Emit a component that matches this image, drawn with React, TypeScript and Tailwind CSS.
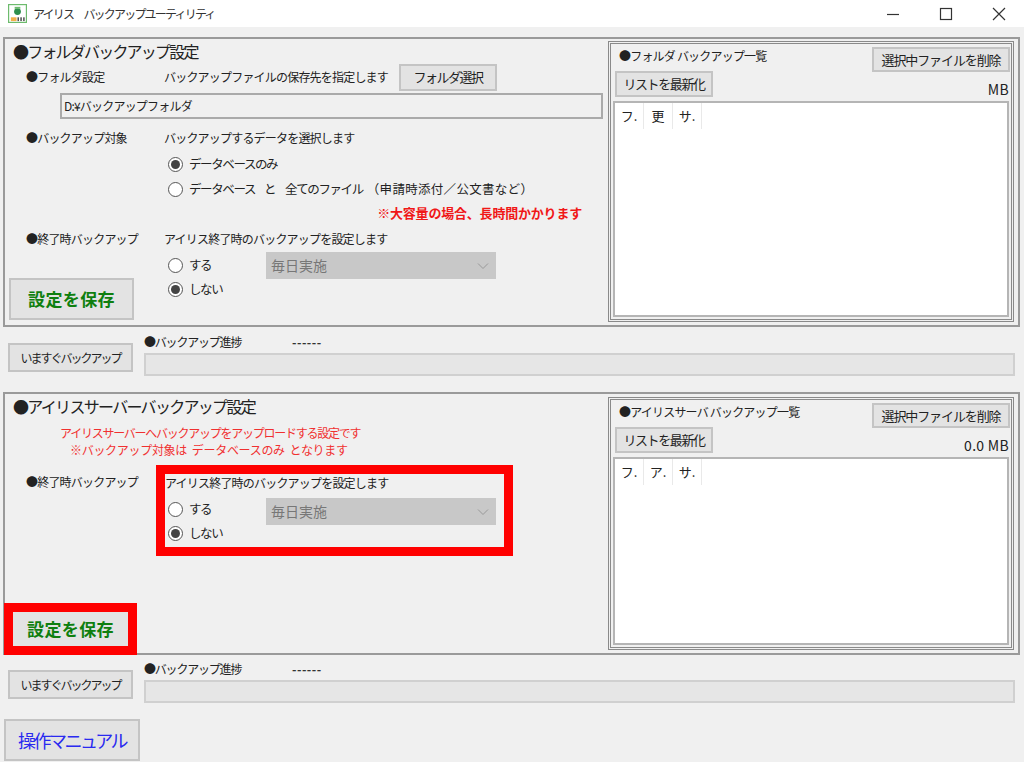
import type { ReactNode } from "react";

const font = "font-['Noto_Sans_CJK_JP','Noto_Sans',sans-serif]";

function Radio({ checked, label, className = "" }: { checked?: boolean; label: ReactNode; className?: string }) {
  return (
    <div className={`flex items-center gap-[6px] whitespace-nowrap text-[12.5px] tracking-[-1.4px] text-[#222] ${className}`}>
      <span className="flex h-[15px] w-[15px] items-center justify-center rounded-full border border-[#555] bg-white">
        {checked ? <span className="h-[9px] w-[9px] rounded-full bg-[#444]" /> : null}
      </span>
      <span>{label}</span>
    </div>
  );
}

function Btn({ children, className = "" }: { children: ReactNode; className?: string }) {
  return (
    <div className={`flex items-center justify-center border-2 border-[#c4c4c4] bg-[#e3e3e3] whitespace-nowrap ${className}`}>
      {children}
    </div>
  );
}

function Label({ children, className = "" }: { children: ReactNode; className?: string }) {
  return <div className={`whitespace-nowrap text-[12px] leading-[18px] tracking-[-0.8px] text-[#222] ${className}`}>{children}</div>;
}

function Select() {
  return (
    <div className="flex h-[27px] w-[230px] items-center justify-between bg-[#c8c8c8] pl-[5px] pr-[7px] text-[14px] text-[#777]">
      <span>毎日実施</span>
      <svg width="12" height="8" viewBox="0 0 12 8" fill="none" stroke="#999" strokeWidth="1">
        <path d="M1 1.5 6 6.5 11 1.5" />
      </svg>
    </div>
  );
}

function ListPanel({ title, size, cols, h }: { title: string; size: string; cols: string[]; h: string }) {
  return (
    <div className={`relative mr-[3px] w-[406px] border-[3px] border-double border-[#8a8a8a] bg-[#f0f0f0] ${h}`}>
      <div className="flex items-start justify-between pl-[6px] pr-[1px] pt-[3px]">
        <Label className="pl-[2px]">{title}</Label>
        <Btn className="h-[25px] w-[138px] text-[13px] tracking-[-1.1px] text-[#222]">選択中ファイルを削除</Btn>
      </div>
      <div className="-mt-[1px] flex items-end justify-between pl-[4px] pr-[2px]">
        <Btn className="h-[26px] w-[98px] text-[13px] tracking-[-1.4px] text-[#222]">リストを最新化</Btn>
        <span className="text-[14px] leading-[16px] tracking-[0.3px] text-[#222]">{size}</span>
      </div>
      <div className="mx-[2px] mt-[4px] flex h-[calc(100%-59px)] items-start border-2 border-[#b5b5b5] bg-white">
        {cols.map((c) => (
          <div key={c} className="flex h-[26px] w-[29px] items-center justify-center border-r border-[#e9e9e9] text-[13px] text-[#222]">
            {c}
          </div>
        ))}
      </div>
    </div>
  );
}

function Progress() {
  return (
    <div className="flex px-[8px]">
      <Btn className="mt-[10px] h-[29px] w-[125px] text-[12px] tracking-[-2px] text-[#222]">いますぐバックアップ</Btn>
      <div className="ml-[11px] flex-1">
        <div className="flex h-[18px] items-center text-[12px] text-[#222]">
          <span className="w-[148px] tracking-[-1.2px]">●バックアップ進捗</span>
          <span className="font-bold tracking-[0.5px] text-[#333]">------</span>
        </div>
        <div className="mr-[1px] mt-[2px] h-[23px] border-2 border-[#d0d0d0] bg-[#e6e6e6]" />
      </div>
    </div>
  );
}

export default function App() {
  return (
    <div className={`flex h-[762px] w-[1024px] flex-col overflow-hidden bg-[#f0f0f0] ${font}`}>
      {/* title bar */}
      <div className="flex h-[27px] shrink-0 items-center bg-white pl-[8px]">
        <svg width="19" height="19" viewBox="0 0 20 20">
          <rect x="0.5" y="0.5" width="19" height="19" fill="#fff" stroke="#6dbb6d" strokeWidth="1.5" />
          <circle cx="10" cy="8" r="3.6" fill="#2f8f4e" />
          <rect x="7" y="3" width="6" height="2" fill="#6dbb6d" />
          <rect x="3" y="14" width="6" height="4" fill="#f2b04a" />
          <rect x="10" y="14" width="1.5" height="4" fill="#444" />
          <rect x="13" y="14" width="1.5" height="4" fill="#444" />
          <rect x="16" y="14" width="1.5" height="4" fill="#444" />
        </svg>
        <span className="ml-[6px] whitespace-nowrap text-[12px] tracking-[-1.8px] text-[#333]">アイリス　バックアップユーティリティ</span>
        <div className="ml-auto flex items-center">
          <svg width="14" height="14" viewBox="0 0 14 14" stroke="#333" strokeWidth="1.2" fill="none" className="mr-[39px]">
            <path d="M1 7.5H13" />
          </svg>
          <svg width="14" height="14" viewBox="0 0 14 14" stroke="#333" strokeWidth="1.2" fill="none" className="mr-[39px]">
            <rect x="1.5" y="1.5" width="11" height="11" />
          </svg>
          <svg width="14" height="14" viewBox="0 0 14 14" stroke="#333" strokeWidth="1.2" fill="none" className="mr-[18px]">
            <path d="M1 1 13 13M13 1 1 13" />
          </svg>
        </div>
      </div>

      {/* folder backup */}
      <div className="mx-[3px] mt-[10px] flex h-[290px] w-[1017px] shrink-0 border-2 border-[#9a9a9a]">
        <div className="w-[603px] shrink-0">
          <div className="flex h-[24px] items-center whitespace-nowrap pl-[8px] text-[16px] tracking-[-1.8px] text-[#222]">●フォルダバックアップ設定</div>
          <div className="flex h-[28px] items-center pl-[21px]">
            <Label className="w-[138px]">●フォルダ設定</Label>
            <Label>バックアップファイルの保存先を指定します</Label>
            <Btn className="ml-[11px] h-[27px] w-[98px] text-[13px] tracking-[-1.5px] text-[#222]">フォルダ選択</Btn>
          </div>
          <div className="ml-[55px] mr-[5px] mt-[2px] flex h-[26px] items-center border-2 border-[#aaa] pl-[2px] text-[12px] tracking-[-0.8px] text-[#222]">D:¥バックアップフォルダ</div>
          <div className="mt-[9px] flex h-[20px] items-center pl-[21px]">
            <Label className="w-[138px]">●バックアップ対象</Label>
            <Label>バックアップするデータを選択します</Label>
          </div>
          <Radio checked label="データベースのみ" className="ml-[163px] mt-[4px] h-[25px]" />
          <Radio
            label={
              <>
                データベース
                <span className="ml-[9px]">と</span>
                <span className="ml-[10px]">全てのファイル</span>
                <span className="ml-[4px] tracking-[0.3px]">（申請時添付／公文書など）</span>
              </>
            }
            className="ml-[163px] h-[25px]"
          />
          <div className="flex h-[22px] items-center justify-end whitespace-nowrap pr-[26px] text-[13px] font-bold tracking-[-0.2px] text-[#f01818]">※大容量の場合、長時間かかります</div>
          <div className="mt-[5px] flex h-[20px] items-center pl-[21px]">
            <Label className="w-[138px]">●終了時バックアップ</Label>
            <Label>アイリス終了時のバックアップを設定します</Label>
          </div>
          <div className="flex pl-[4px]">
            <Btn className="mt-[29px] h-[42px] w-[125px] text-[17px] font-bold tracking-[0.4px] text-[#0f7f0f]">設定を保存</Btn>
            <div className="ml-[34px] mt-[4px] w-[90px]">
              <Radio label="する" className="h-[24px]" />
              <Radio checked label="しない" className="h-[24px]" />
            </div>
            <div className="ml-[8px] mt-[3px]">
              <Select />
            </div>
          </div>
        </div>
        <ListPanel title="●フォルダ バックアップ一覧" size="MB" cols={["フ.", "更", "サ."]} h="mt-[2px] h-[281px]" />
      </div>

      <div className="mt-[6px] shrink-0">
        <Progress />
      </div>

      {/* iris server backup */}
      <div className="mx-[3px] mt-[16px] flex h-[263px] w-[1017px] shrink-0 border-2 border-[#9a9a9a]">
        <div className="w-[603px] shrink-0">
          <div className="flex h-[24px] items-center whitespace-nowrap pl-[8px] text-[16px] tracking-[-1.7px] text-[#222]">●アイリスサーバーバックアップ設定</div>
          <div className="whitespace-nowrap pl-[55px] pt-[6px] text-[12px] leading-[17px] tracking-[-1.25px] text-[#f03030]">
            <div>アイリスサーバーへバックアップをアップロードする設定です</div>
            <div className="pl-[10px] tracking-[-0.3px]">{"※バックアップ対象は\u00a0\u00a0データベースのみ\u00a0\u00a0となります"}</div>
          </div>
          <div className="flex pl-[21px] pt-[7px]">
            <Label className="mt-[8px] w-[130px]">●終了時バックアップ</Label>
            <div className="h-[91px] w-[357px] border-[9px] border-[#ff0000]">
              <Label className="leading-[16px]">アイリス終了時のバックアップを設定します</Label>
              <div className="flex">
                <div className="mt-[5px] w-[97px]">
                  <Radio label="する" className="h-[24px] pl-[3px]" />
                  <Radio checked label="しない" className="h-[24px] pl-[3px]" />
                </div>
                <div className="mt-[6px] ml-[4px]">
                  <Select />
                </div>
              </div>
            </div>
          </div>
          <div className="-ml-[1px] mt-[47px] flex h-[52px] w-[133px] items-center justify-center border-[9px] border-[#ff0000] bg-[#e3e3e3] text-[17px] font-bold tracking-[0.4px] text-[#0f7f0f]">
            設定を保存
          </div>
        </div>
        <ListPanel title="●アイリスサーバ バックアップ一覧" size="0.0 MB" cols={["フ.", "ア.", "サ."]} h="mt-[3px] h-[253px]" />
      </div>

      <div className="mt-[5px] shrink-0">
        <Progress />
      </div>

      <Btn className="ml-[4px] mt-[16px] h-[42px] w-[136px] shrink-0 text-[18px] tracking-[-2.5px] text-[#2a2af0]">操作マニュアル</Btn>
    </div>
  );
}
